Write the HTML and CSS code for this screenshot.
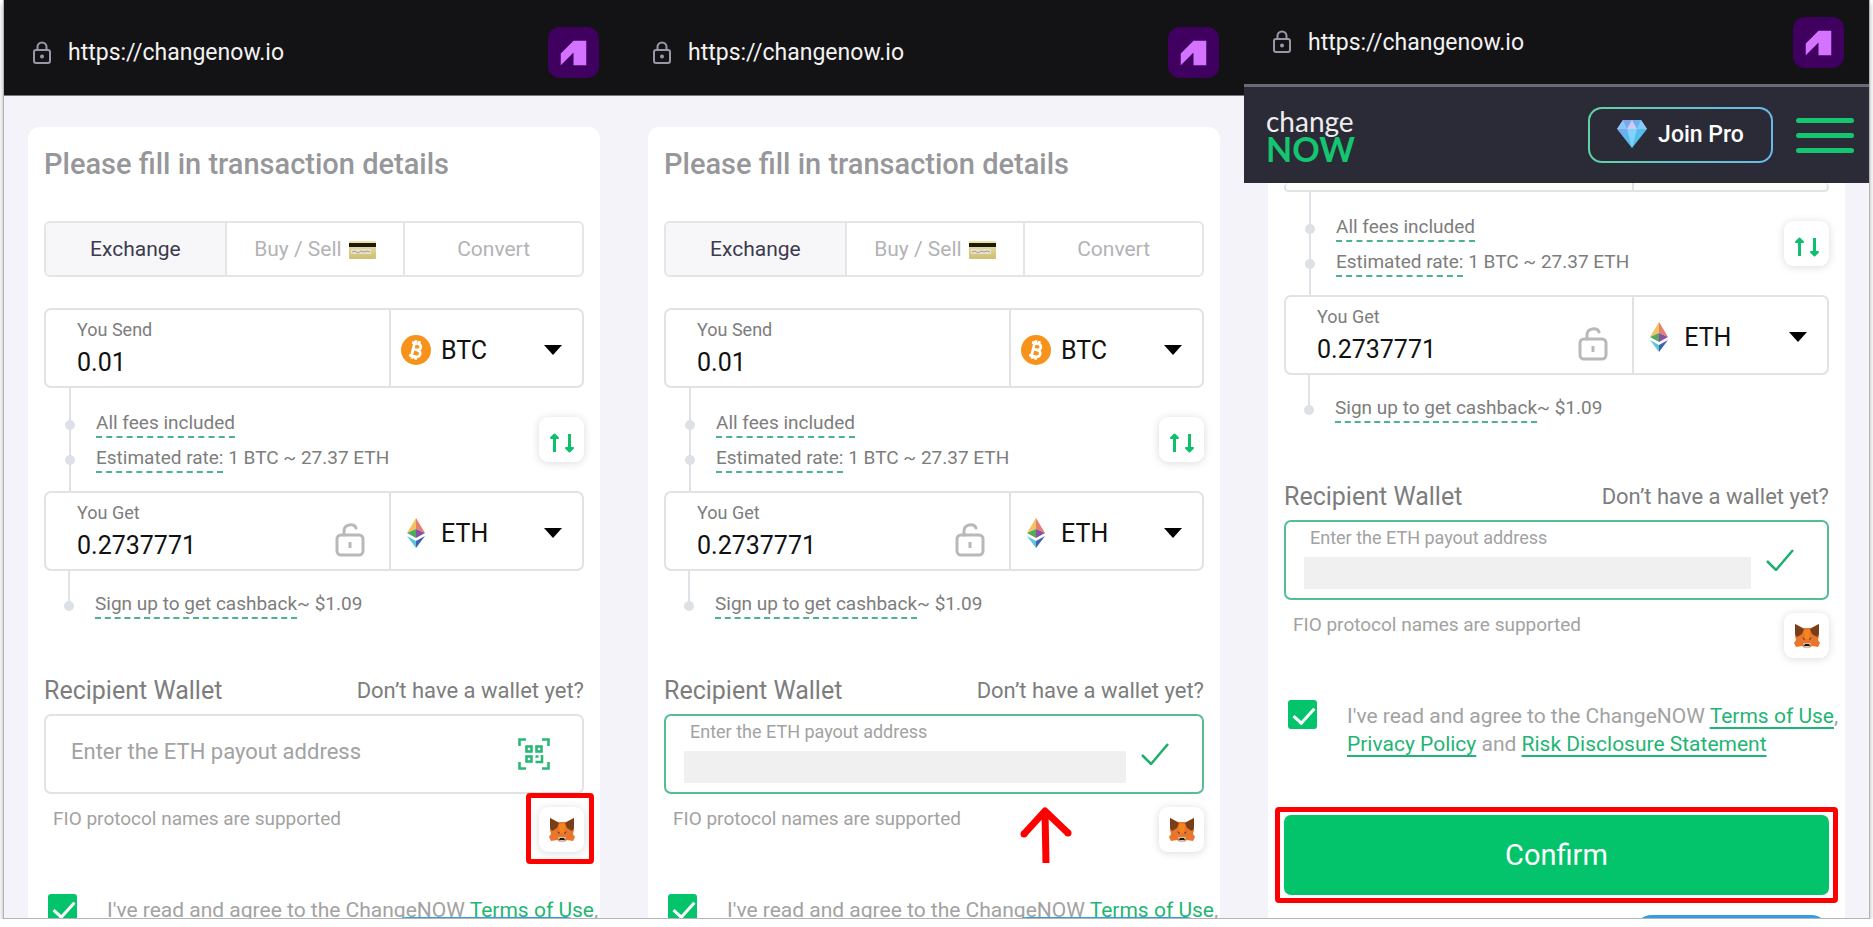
FILE: index.html
```html
<!DOCTYPE html>
<html lang="en">
<head>
    <meta charset="UTF-8">
    <meta name="viewport" content="width=device-width, initial-scale=1.0">
    <title>ChangeNOW</title>
    <link rel="stylesheet" href="styles.css">
</head>
<body>
    <!-- shared icons -->
    <svg class="defs" aria-hidden="true">
        <defs>
            <linearGradient id="gem" x1="0" y1="0" x2="1" y2="1">
                <stop offset="0" stop-color="#8f9be8"/>
                <stop offset="0.5" stop-color="#5cb9f0"/>
                <stop offset="1" stop-color="#45c8e8"/>
            </linearGradient>
            <linearGradient id="gold" x1="0" y1="0" x2="0" y2="1">
                <stop offset="0" stop-color="#efe6a4"/>
                <stop offset="1" stop-color="#cdbd74"/>
            </linearGradient>
        </defs>
        <symbol id="lock" viewBox="0 0 18 24">
            <rect x="1" y="9" width="16" height="13" rx="2" fill="none" stroke="#9a98a8" stroke-width="2"/>
            <path d="M4.500 9V6a4.500 4.500 0 0 1 9 0v3" fill="none" stroke="#9a98a8" stroke-width="2"/>
            <circle cx="9" cy="15.500" r="2" fill="#9a98a8"/>
        </symbol>
        <symbol id="app" viewBox="0 0 52 52">
            <rect width="52" height="52" rx="12" fill="#400060"/>
            <path d="M13 27L26 14h13v25H26V26L13 39z" fill="#d373ff"/>
        </symbol>
        <symbol id="card" viewBox="0 0 27 18">
            <rect width="27" height="18" rx="1" fill="url(#gold)"/>
            <rect y="2" width="27" height="4" fill="#1d1a12"/>
            <rect x="2" y="8" width="20" height="5" fill="#e4e0cf"/>
            <path d="M3 11l3-1 3 2 3-2 3 1 3-1 3 1" fill="none" stroke="#a5a08a" stroke-width="1"/>
        </symbol>
        <symbol id="btc" viewBox="0 0 30 30">
            <circle cx="15" cy="15" r="15" fill="#f7931a"/>
            <g transform="rotate(13 15 15)" fill="none" stroke="#fff" stroke-width="2.700">
                <path d="M9.500 8.500h6.500a3 3 0 0 1 0 6.200h-4h4.600a3.300 3.300 0 0 1 0 6.800H9.500M12 8.500v13M13 5.500v3M16.500 5.500v3M13 21.500v3M16.500 21.500v3"/>
            </g>
        </symbol>
        <symbol id="eth" viewBox="0 0 18 30">
            <path d="M9 0L0 15l9-4z" fill="#f3c35f"/>
            <path d="M9 0l9 15-9-4z" fill="#e5806f"/>
            <path d="M0 15l9-4v9z" fill="#55a862"/>
            <path d="M18 15l-9-4v9z" fill="#8b4fa5"/>
            <path d="M0 18l9 5v7z" fill="#5fc3dc"/>
            <path d="M18 18l-9 5v7z" fill="#3d63ad"/>
        </symbol>
        <symbol id="caret" viewBox="0 0 18 10">
            <path d="M0 0h18L9 10z" fill="#000"/>
        </symbol>
        <symbol id="unlock" viewBox="0 0 30 34">
            <rect x="2" y="12" width="26" height="20" rx="4" fill="none" stroke="#b9b9b9" stroke-width="3"/>
            <path d="M9 12V8c0-7 10-8 12-3" fill="none" stroke="#b9b9b9" stroke-width="3" stroke-linecap="round"/>
            <path d="M15 19v6" stroke="#b9b9b9" stroke-width="3"/>
        </symbol>
        <symbol id="swap" viewBox="0 0 26 20">
            <g fill="#0fbf6b" stroke="#0fbf6b" stroke-width="2" stroke-linejoin="round">
                <path d="M2 5l3.500-3.500L9 5z"/>
                <path d="M17 15l3.500 3.500L24 15z"/>
                <path d="M5.500 19V3M20.500 1v16" stroke-width="3"/>
            </g>
        </symbol>
        <symbol id="qr" viewBox="0 0 32 32">
            <g fill="none" stroke="#2ab877" stroke-width="2.600">
                <path d="M1.500 8V1.500H8M24 1.500h6.500V8M1.500 24v6.500H8M24 30.500h6.500V24"/>
                <rect x="8.500" y="8.500" width="5" height="5"/>
                <rect x="18.500" y="8.500" width="5" height="5"/>
                <rect x="8.500" y="18.500" width="5" height="5"/>
                <path d="M17.500 18.500h3M24 17v7h-6.500"/>
            </g>
        </symbol>
        <symbol id="fox" viewBox="0 0 26 24">
            <path d="M1 0l8 4h8l8-4v12l-1 4 2 3-2 4-6-1-3 2h-4l-3-2-6 1-2-4 2-3-1-4z" fill="#e8762c"/>
            <path d="M1 0l9 5-2 5-5 3-2-3z" fill="#763e1a"/>
            <path d="M25 0l-9 5 2 5 5 3 2-3z" fill="#763e1a"/>
            <path d="M10 6h6l-1 9h-4z" fill="#f6851b"/>
            <path d="M8 13l3 2-1 1zM18 13l-3 2 1 1z" fill="#5b3526"/>
            <path d="M9 19h8l-2 5h-4z" fill="#d6c0b3"/>
            <path d="M11 20h4l1 2h-6z" fill="#161616"/>
        </symbol>
        <symbol id="tick" viewBox="0 0 28 22">
            <path d="M1 12l9 9L27 1" fill="none" stroke="#1fae6e" stroke-width="2.500"/>
        </symbol>
        <symbol id="gemstone" viewBox="0 0 30 28">
            <path d="M6 0h18l6 9-15 19L0 9z" fill="url(#gem)"/>
            <path d="M6 0l4 9H0zM24 0l-4 9h10z" fill="#8cc8f5"/>
            <path d="M15 0l5 9H10z" fill="#d3c8f4"/>
            <path d="M10 9h10l-5 19z" fill="#7fd3f8"/>
        </symbol>
    </svg>

    <div class="frame">
        <section class="phone">
            <div class="bar">
                <svg class="lock"><use href="#lock"/></svg>
                <span class="url">https://changenow.io</span>
                <svg class="app"><use href="#app"/></svg>
            </div>
            <div class="page">
                <div class="card">
                    <h2>Please fill in transaction details</h2>
                    <div class="tabs">
                        <button class="tab active">Exchange</button>
                        <button class="tab">Buy / Sell <svg class="credit"><use href="#card"/></svg></button>
                        <button class="tab">Convert</button>
                    </div>
                    <div class="box">
                        <div class="amount">
                            <label for="send1">You Send</label>
                            <input id="send1" type="text" value="0.01">
                        </div>
                        <div class="currency">
                            <svg class="coin"><use href="#btc"/></svg>
                            <select aria-label="Send currency"><option>BTC</option></select>
                            <svg class="caret"><use href="#caret"/></svg>
                        </div>
                    </div>
                    <div class="rates">
                        <ul>
                            <li><span class="dashed">All fees included</span></li>
                            <li><span class="dashed">Estimated rate:</span> 1 BTC ~ 27.37 ETH</li>
                        </ul>
                        <button class="square swap" aria-label="Swap"><svg><use href="#swap"/></svg></button>
                    </div>
                    <div class="box">
                        <div class="amount">
                            <label for="get1">You Get</label>
                            <input id="get1" type="text" value="0.2737771">
                            <svg class="unlock"><use href="#unlock"/></svg>
                        </div>
                        <div class="currency">
                            <svg class="coin"><use href="#eth"/></svg>
                            <select aria-label="Get currency"><option>ETH</option></select>
                            <svg class="caret"><use href="#caret"/></svg>
                        </div>
                    </div>
                    <div class="cashback"><span class="dashed">Sign up to get cashback</span>~ $1.09</div>
                    <div class="wallet-head">
                        <label for="wallet1">Recipient Wallet</label>
                        <a href="#">Don’t have a wallet yet?</a>
                    </div>
                    <div class="wallet">
                        <input id="wallet1" type="text" placeholder="Enter the ETH payout address">
                        <svg class="qr"><use href="#qr"/></svg>
                    </div>
                    <div class="helper">
                        <p>FIO protocol names are supported</p>
                        <button class="square marked" aria-label="MetaMask"><svg><use href="#fox"/></svg></button>
                    </div>
                    <div class="agree">
                        <input id="agree1" type="checkbox" checked>
                        <label for="agree1">I've read and agree to the ChangeNOW <a href="#">Terms of Use</a>,<br><a href="#">Privacy Policy</a> and <a href="#">Risk Disclosure Statement</a></label>
                    </div>
                </div>
            </div>
            <div class="chat"></div>
        </section>

        <section class="phone">
            <div class="bar">
                <svg class="lock"><use href="#lock"/></svg>
                <span class="url">https://changenow.io</span>
                <svg class="app"><use href="#app"/></svg>
            </div>
            <div class="page">
                <div class="card">
                    <h2>Please fill in transaction details</h2>
                    <div class="tabs">
                        <button class="tab active">Exchange</button>
                        <button class="tab">Buy / Sell <svg class="credit"><use href="#card"/></svg></button>
                        <button class="tab">Convert</button>
                    </div>
                    <div class="box">
                        <div class="amount">
                            <label for="send2">You Send</label>
                            <input id="send2" type="text" value="0.01">
                        </div>
                        <div class="currency">
                            <svg class="coin"><use href="#btc"/></svg>
                            <select aria-label="Send currency"><option>BTC</option></select>
                            <svg class="caret"><use href="#caret"/></svg>
                        </div>
                    </div>
                    <div class="rates">
                        <ul>
                            <li><span class="dashed">All fees included</span></li>
                            <li><span class="dashed">Estimated rate:</span> 1 BTC ~ 27.37 ETH</li>
                        </ul>
                        <button class="square swap" aria-label="Swap"><svg><use href="#swap"/></svg></button>
                    </div>
                    <div class="box">
                        <div class="amount">
                            <label for="get2">You Get</label>
                            <input id="get2" type="text" value="0.2737771">
                            <svg class="unlock"><use href="#unlock"/></svg>
                        </div>
                        <div class="currency">
                            <svg class="coin"><use href="#eth"/></svg>
                            <select aria-label="Get currency"><option>ETH</option></select>
                            <svg class="caret"><use href="#caret"/></svg>
                        </div>
                    </div>
                    <div class="cashback"><span class="dashed">Sign up to get cashback</span>~ $1.09</div>
                    <div class="wallet-head">
                        <span>Recipient Wallet</span>
                        <a href="#">Don’t have a wallet yet?</a>
                    </div>
                    <div class="wallet filled">
                        <div class="payout">
                            <label for="wallet2">Enter the ETH payout address</label>
                            <input id="wallet2" type="text">
                        </div>
                        <svg class="tick"><use href="#tick"/></svg>
                    </div>
                    <div class="helper">
                        <p>FIO protocol names are supported</p>
                        <button class="square" aria-label="MetaMask"><svg><use href="#fox"/></svg></button>
                        <svg class="arrow" viewBox="0 0 52 56"><path d="M4 27L25 4l23 22M25 5l1 51" fill="none" stroke="#f00" stroke-width="7" stroke-linejoin="round"/><circle cx="4" cy="27" r="3.500" fill="#f00"/><circle cx="48" cy="26" r="3.500" fill="#f00"/></svg>
                    </div>
                    <div class="agree">
                        <input id="agree2" type="checkbox" checked>
                        <label for="agree2">I've read and agree to the ChangeNOW <a href="#">Terms of Use</a>,<br><a href="#">Privacy Policy</a> and <a href="#">Risk Disclosure Statement</a></label>
                    </div>
                </div>
            </div>
            <div class="chat"></div>
        </section>

        <section class="phone scrolled">
            <div class="bar">
                <svg class="lock"><use href="#lock"/></svg>
                <span class="url">https://changenow.io</span>
                <svg class="app"><use href="#app"/></svg>
            </div>
            <header class="site-header">
                <a class="logo" href="#"><span>change</span><b>NOW</b></a>
                <button class="pro"><svg><use href="#gemstone"/></svg>Join Pro</button>
                <button class="menu" aria-label="Menu"><i></i><i></i><i></i></button>
            </header>
            <div class="page">
                <div class="card">
                    <div class="box cut"><div></div><div></div></div>
                    <div class="rates">
                        <ul>
                            <li><span class="dashed">All fees included</span></li>
                            <li><span class="dashed">Estimated rate:</span> 1 BTC ~ 27.37 ETH</li>
                        </ul>
                        <button class="square swap" aria-label="Swap"><svg><use href="#swap"/></svg></button>
                    </div>
                    <div class="box">
                        <div class="amount">
                            <label for="get3">You Get</label>
                            <input id="get3" type="text" value="0.2737771">
                            <svg class="unlock"><use href="#unlock"/></svg>
                        </div>
                        <div class="currency">
                            <svg class="coin"><use href="#eth"/></svg>
                            <select aria-label="Get currency"><option>ETH</option></select>
                            <svg class="caret"><use href="#caret"/></svg>
                        </div>
                    </div>
                    <div class="cashback"><span class="dashed">Sign up to get cashback</span>~ $1.09</div>
                    <div class="wallet-head">
                        <span>Recipient Wallet</span>
                        <a href="#">Don’t have a wallet yet?</a>
                    </div>
                    <div class="wallet filled">
                        <div class="payout">
                            <label for="wallet3">Enter the ETH payout address</label>
                            <input id="wallet3" type="text">
                        </div>
                        <svg class="tick"><use href="#tick"/></svg>
                    </div>
                    <div class="helper">
                        <p>FIO protocol names are supported</p>
                        <button class="square" aria-label="MetaMask"><svg><use href="#fox"/></svg></button>
                    </div>
                    <div class="agree">
                        <input id="agree3" type="checkbox" checked>
                        <label for="agree3">I've read and agree to the ChangeNOW <a href="#">Terms of Use</a>,<br><a href="#">Privacy Policy</a> and <a href="#">Risk Disclosure Statement</a></label>
                    </div>
                    <button class="confirm marked">Confirm</button>
                </div>
            </div>
            <div class="chat"></div>
        </section>
    </div>
</body>
</html>
```

FILE: styles.css
```css
* {
    margin: 0;
    padding: 0;
    box-sizing: border-box;
}
body {
    background-color: #fff;
    font-family: Roboto, "Liberation Sans", sans-serif;
    font-size: 21px;
    color: #7d7d7d;
    overflow: hidden;
}
button, input, select {
    font-family: inherit;
    border: none;
    background: none;
    outline: none;
}
button {
    cursor: pointer;
}
a {
    color: inherit;
    text-decoration: none;
}
.defs {
    position: absolute;
    width: 0;
    height: 0;
}

.frame {
    display: grid;
    grid-template-columns: 620fr 620fr 625fr;
    height: calc(100vh - 8px);
    margin: 0 3px;
    border: 1px solid #b4b4b4;
    border-top: none;
    box-shadow: 0 3px 5px rgba(0, 0, 0, 0.3);
}
.phone {
    position: relative;
    overflow: hidden;
    background-color: #f4f3fa;
}

/* browser bar */
.bar {
    display: flex;
    align-items: center;
    height: 96px;
    padding: 10px 25px 0 29px;
    background-color: #131315;
    border-bottom: 1px solid #77777b;
}
.lock {
    width: 18px;
    height: 24px;
    margin-right: 17px;
}
.url {
    flex: 1;
    font-size: 23px;
    color: #f2f2f2;
}
.app {
    width: 51px;
    height: 51px;
}
.scrolled .bar {
    height: 87px;
    padding-top: 0;
    border-bottom: 3px solid #6a6974;
}

.site-header {
    display: flex;
    align-items: center;
    height: 96px;
    padding: 0 15px 0 22px;
    background-color: #2b2b37;
}
.logo {
    flex: 1;
    display: flex;
    flex-direction: column;
    font-family: Lato, sans-serif;
    color: #eee;
}
.logo span {
    font-size: 28px;
    line-height: 28px;
}
.logo b {
    font-size: 34px;
    line-height: 28px;
    color: #13c66f;
}
.pro {
    display: flex;
    align-items: center;
    justify-content: center;
    gap: 11px;
    width: 185px;
    height: 56px;
    margin-right: 23px;
    padding-bottom: 2px;
    border: 2px solid transparent;
    border-radius: 14px;
    background: linear-gradient(#2b2b37, #2b2b37) padding-box, linear-gradient(90deg, #5fd3a6, #6bb8ea) border-box;
    font-size: 23px;
    font-weight: 500;
    color: #fff;
}
.pro svg {
    width: 30px;
    height: 28px;
}
.menu {
    display: flex;
    flex-direction: column;
    gap: 10px;
    width: 58px;
}
.menu i {
    height: 5px;
    border-radius: 3px;
    background-color: #13c66f;
}

/* exchange form */
.page {
    padding: 31px 24px 0;
}
.card {
    padding: 17px 16px 40px;
    border-radius: 12px;
    background-color: #fff;
}
.scrolled .page {
    padding-top: 0;
}
.scrolled .card {
    padding-top: 0;
    border-radius: 0;
}
h2 {
    margin-bottom: 37px;
    font-size: 29px;
    font-weight: 500;
    line-height: 40px;
    color: #97979b;
}
.tabs {
    display: grid;
    grid-template-columns: repeat(3, 1fr);
    height: 56px;
    margin-bottom: 31px;
    border: 2px solid #e5e5e7;
    border-radius: 6px;
    overflow: hidden;
}
.tab {
    font-size: 21px;
    color: #b3b3b6;
}
.tab + .tab {
    border-left: 2px solid #e5e5e7;
}
.tab.active {
    background-color: #f7f7fa;
    color: #3c3b4d;
}
.credit {
    width: 27px;
    height: 18px;
    margin-left: 2px;
    vertical-align: -3px;
}
.box {
    display: grid;
    grid-template-columns: 16fr 9fr;
    height: 80px;
    border: 2px solid #e2e2e4;
    border-radius: 7px;
}
.box.cut {
    height: 9px;
    border-top: none;
}
.box > * + * {
    border-left: 2px solid #e2e2e4;
}
.amount {
    position: relative;
    padding: 9px 0 0 31px;
}
.amount label {
    display: block;
    margin-bottom: 5px;
    font-size: 18px;
    line-height: 22px;
}
.amount input {
    display: block;
    width: 200px;
    height: 32px;
    font-size: 25px;
    color: #111;
}
.unlock {
    position: absolute;
    right: 24px;
    bottom: 12px;
    width: 30px;
    height: 34px;
}
.currency {
    display: flex;
    align-items: center;
    padding: 4px 20px 0 10px;
}
.coin {
    width: 30px;
    height: 30px;
    margin-right: 10px;
}
.currency select {
    flex: 1;
    appearance: none;
    font-size: 25px;
    color: #111;
}
.caret {
    width: 18px;
    height: 10px;
}
.rates {
    display: flex;
    justify-content: space-between;
    height: 103px;
}
.rates ul {
    margin-left: 25px;
    padding: 22px 0 0 25px;
    border-left: 2px solid #dfe3e8;
    list-style: none;
}
.rates li, .cashback {
    position: relative;
    font-size: 19px;
    line-height: 26px;
}
.rates li {
    height: 35px;
}
.rates li::before, .cashback::after {
    content: "";
    position: absolute;
    left: -31px;
    top: 10px;
    width: 10px;
    height: 10px;
    border-radius: 50%;
    background-color: #dce1e7;
}
.dashed {
    display: inline-block;
    border-bottom: 2px dashed #4db38a;
}
.square {
    display: flex;
    align-items: center;
    justify-content: center;
    width: 45px;
    height: 45px;
    border-radius: 9px;
    background-color: #fff;
    box-shadow: 0 1px 8px rgba(0, 0, 0, 0.15);
}
.square svg {
    width: 26px;
    height: 24px;
}
.swap {
    margin-top: 29px;
    padding-top: 6px;
}
.swap svg {
    height: 20px;
}
.cashback {
    margin-bottom: 58px;
    padding: 20px 0 0 51px;
}
.scrolled .cashback {
    margin-bottom: 60px;
}
.cashback::before {
    content: "";
    position: absolute;
    left: 24px;
    top: 0;
    width: 2px;
    height: 36px;
    background-color: #dfe3e8;
}
.cashback::after {
    left: 20px;
    top: 30px;
}
.wallet-head {
    display: flex;
    justify-content: space-between;
    margin-bottom: 9px;
    font-size: 25px;
    line-height: 28px;
}
.wallet-head a {
    font-size: 22px;
}
.wallet {
    display: flex;
    align-items: center;
    height: 80px;
    padding: 0 32px 0 25px;
    border: 2px solid #e2e2e4;
    border-radius: 7px;
}
.wallet input {
    flex: 1;
    height: 40px;
    padding-bottom: 5px;
    font-size: 22px;
}
.wallet input::placeholder {
    color: #a2a2a2;
}
.qr {
    width: 32px;
    height: 32px;
}
.wallet.filled {
    gap: 15px;
    padding: 0 33px 0 18px;
    border-color: #55bd91;
}
.payout {
    flex: 1;
    display: flex;
    flex-direction: column;
    gap: 8px;
    padding-bottom: 5px;
}
.payout label {
    padding-left: 6px;
    font-size: 18px;
    line-height: 22px;
    color: #a2a2a2;
}
.payout input {
    flex: none;
    height: 32px;
    background-color: #f0f0f0;
}
.tick {
    width: 28px;
    height: 22px;
}
.helper {
    position: relative;
    display: flex;
    justify-content: space-between;
    margin-bottom: 42px;
    padding: 13px 0 0 9px;
    font-size: 19px;
    line-height: 24px;
    color: #a2a2a2;
}
.arrow {
    position: absolute;
    left: 356px;
    top: 13px;
    width: 52px;
    height: 56px;
}
.agree {
    display: flex;
    padding-left: 4px;
    line-height: 28px;
    color: #a2a2a2;
    white-space: nowrap;
}
.agree input {
    appearance: none;
    flex: none;
    position: relative;
    width: 29px;
    height: 29px;
    margin-right: 30px;
    border-radius: 3px;
    background-color: #04c46b;
}
.agree input:checked::after {
    content: "";
    position: absolute;
    left: 10px;
    top: 3px;
    width: 9px;
    height: 18px;
    border: solid #fff;
    border-width: 0 3px 3px 0;
    transform: rotate(42deg);
}
.agree label {
    padding-top: 2px;
}
.agree a {
    color: #1fb574;
    text-decoration: underline 2px;
    text-underline-offset: 4px;
}
.confirm {
    position: relative;
    width: 100%;
    height: 80px;
    margin-top: 57px;
    border-radius: 7px;
    background-color: #04c46b;
    font-size: 29px;
    color: #fff;
}

/* red highlight around a control */
.marked {
    position: relative;
}
.marked::after {
    content: "";
    position: absolute;
    inset: -14px -10px -12px -13px;
    border: 5px solid #f00;
    border-radius: 4px;
}
.confirm.marked::after {
    inset: -8px -9px;
}
.chat {
    position: absolute;
    right: 40px;
    bottom: -59px;
    width: 195px;
    height: 60px;
    border-radius: 18px;
    background-color: #2f9fe0;
}
.scrolled .chat {
    bottom: -57px;
}
```
